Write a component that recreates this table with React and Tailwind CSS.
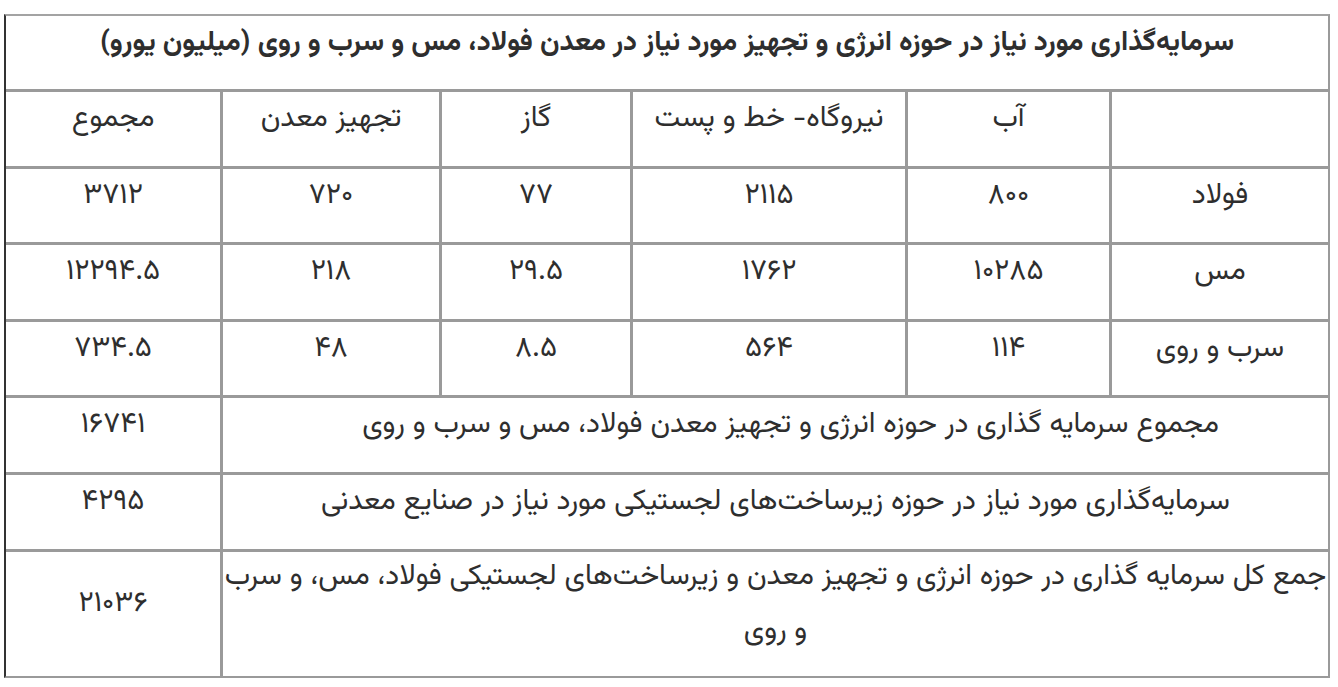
import React from "react";

const FONT = '"Vazirmatn", "Noto Sans Arabic", "DejaVu Sans", sans-serif';

const rows = [
  ["فولاد", "۸۰۰", "۲۱۱۵", "۷۷", "۷۲۰", "۳۷۱۲"],
  ["مس", "۱۰۲۸۵", "۱۷۶۲", "۲۹.۵", "۲۱۸", "۱۲۲۹۴.۵"],
  ["سرب و روی", "۱۱۴", "۵۶۴", "۸.۵", "۴۸", "۷۳۴.۵"],
];

function Cell({ children, className = "" }) {
  return (
    <div className={"bg-white flex items-center justify-center text-center pb-[20px] leading-[54px] " + className}>
      <div>{children}</div>
    </div>
  );
}

export default function App() {
  return (
    <div className="bg-white w-[1338px] h-[687px] overflow-hidden pt-[14px] pl-[4px]" style={{ fontFamily: FONT }}>
      <div className="w-[1326px] border-l-2 border-l-[#333333] border-t-2 border-t-[#a3a3a3] border-r-2 border-r-[#9a9a9a] border-b-2 border-b-[#9a9a9a]">
        <div
          dir="rtl"
          className="grid bg-[#9a9a9a] gap-[3px] grid-cols-[216px_201px_272px_188px_216px_214px] grid-rows-[73px_74px_73px_74px_73px_74px_74px_124px] text-[#2e2e2e] text-[29px]"
        >
          <Cell className="col-span-6 font-bold text-[28px] px-[3px]">
            سرمایه‌گذاری مورد نیاز در حوزه انرژی و تجهیز مورد نیاز در معدن فولاد، مس و سرب و روی (میلیون یورو)
          </Cell>
          <Cell></Cell>
          <Cell>آب</Cell>
          <Cell>نیروگاه- خط و پست</Cell>
          <Cell>گاز</Cell>
          <Cell>تجهیز معدن</Cell>
          <Cell>مجموع</Cell>
          {rows.map((r, i) =>
            r.map((c, j) => <Cell key={i + "-" + j}>{c}</Cell>)
          )}
          <Cell className="col-span-5 pl-[30px]">
            مجموع سرمایه گذاری در حوزه انرژی و تجهیز معدن فولاد، مس و سرب و روی
          </Cell>
          <Cell>۱۶۷۴۱</Cell>
          <Cell className="col-span-5">
            سرمایه‌گذاری مورد نیاز در حوزه زیرساخت‌های لجستیکی مورد نیاز در صنایع معدنی
          </Cell>
          <Cell>۴۲۹۵</Cell>
          <Cell className="col-span-5 whitespace-nowrap">
            جمع کل سرمایه گذاری در حوزه انرژی و تجهیز معدن و زیرساخت‌های لجستیکی فولاد، مس، و سرب
            <br />و روی
          </Cell>
          <Cell>۲۱۰۳۶</Cell>
        </div>
      </div>
    </div>
  );
}
